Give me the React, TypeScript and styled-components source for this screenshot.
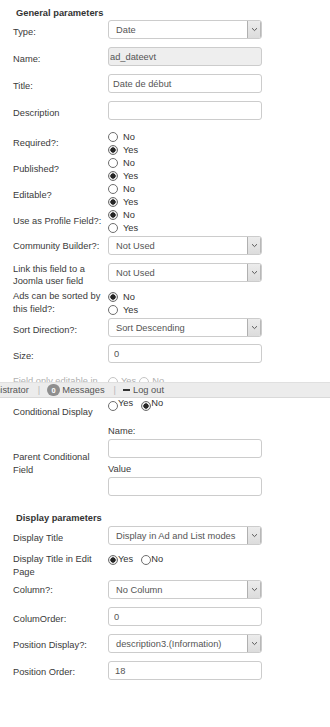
import React from "react";
import styled, { createGlobalStyle } from "styled-components";

const GlobalStyle = createGlobalStyle`
  html, body {
    margin: 0;
    padding: 0;
    background: #ffffff;
  }
  body {
    font-family: "Liberation Sans", Arial, sans-serif;
    font-size: 9.3px;
    color: #3a3a3a;
  }
  * { box-sizing: border-box; }
`;

const Page = styled.div`
  width: 330px;
  min-height: 727px;
  display: flex;
  flex-direction: column;
`;

const Section = styled.div`
  display: flex;
  flex-direction: column;
  padding-left: 13px;
`;

const SectionTitle = styled.div<{ $mt?: number }>`
  margin-top: ${(p) => p.$mt ?? 7}px;
  padding-left: 3px;
  line-height: 12px;
  font-weight: bold;
  color: #333;
`;

const Row = styled.div<{ $mt?: number }>`
  display: grid;
  grid-template-columns: 95px 154px;
  align-items: start;
  margin-top: ${(p) => p.$mt ?? 8}px;
`;

const Label = styled.div<{ $pt?: number; $lh?: number }>`
  padding: ${(p) => p.$pt ?? 6}px 4px 0 0;
  line-height: ${(p) => p.$lh ?? 12}px;
  color: #3a3a3a;
`;

const TextInput = styled.input<{ $pl?: number }>`
  display: block;
  width: 154px;
  height: 19px;
  margin: 0;
  border: 1px solid #cccccc;
  border-radius: 3px;
  background: #ffffff;
  padding: 0 0 0 ${(p) => p.$pl ?? 4}px;
  font: inherit;
  color: #555;
  outline: none;
  &:read-only { cursor: default; }
  &[data-disabled="true"] {
    background: #eeeeee;
  }
`;

const SelectBox = styled.div`
  display: flex;
  align-items: stretch;
  width: 154px;
  height: 19px;
  border: 1px solid #cccccc;
  border-radius: 3px;
  background: #ffffff;
  overflow: hidden;
`;

const SelectText = styled.span`
  flex: 1;
  display: flex;
  align-items: center;
  padding-left: 7px;
  color: #555;
  white-space: nowrap;
`;

const ArrowButton = styled.span`
  width: 14px;
  display: flex;
  align-items: center;
  justify-content: center;
  background: linear-gradient(#ececec, #dcdcdc);
  border-left: 1px solid #b0b0b0;
  border-right: 1px solid #b8b8b8;
`;

const RadioColumn = styled.div`
  display: flex;
  flex-direction: column;
`;

const RadioLine = styled.label`
  display: flex;
  align-items: center;
  height: 13px;
  gap: 5px;
  color: #333;
`;

const RadioInlineGroup = styled.div<{ $mt?: number }>`
  display: flex;
  align-items: flex-start;
  margin-top: ${(p) => p.$mt ?? 0}px;
`;

const RadioInline = styled.label<{ $raise?: boolean }>`
  display: flex;
  align-items: flex-start;
  margin-right: 8px;
  line-height: 10px;
  color: #333;
  & > span:first-child {
    margin-top: ${(p) => (p.$raise ? 3 : 1)}px;
  }
`;

const RadioCircle = styled.span<{ $checked?: boolean; $faded?: boolean }>`
  display: inline-block;
  flex: none;
  width: 10px;
  height: 10px;
  border-radius: 50%;
  border: 1px solid ${(p) => (p.$faded ? "#c4c4c4" : "#6e6e6e")};
  background: ${(p) =>
    p.$checked
      ? "radial-gradient(circle, #262626 0 2.4px, #e4e4e4 2.9px)"
      : "#ffffff"};
`;

const FadedRow = styled.div`
  display: grid;
  grid-template-columns: 95px 154px;
  margin-top: 12px;
  height: 7px;
  overflow: hidden;
  line-height: 13px;
  color: #b0b0b0;
`;

const FadedRadios = styled.div`
  display: flex;
  align-items: center;
  gap: 3px;
  height: 13px;
`;

const Bar = styled.div`
  display: flex;
  align-items: center;
  height: 16px;
  background: #ececec;
  border-top: 1px solid #e0e0e0;
  border-bottom: 1px solid #d9d9d9;
  color: #555;
  white-space: nowrap;
  overflow: hidden;
`;

const CutText = styled.span`
  margin-left: -26px;
`;

const Sep = styled.span`
  color: #b8b8b8;
  margin: 0 7px 0 9px;
`;

const Badge = styled.span`
  display: inline-flex;
  align-items: center;
  justify-content: center;
  min-width: 13px;
  height: 12px;
  padding: 0 3px;
  border-radius: 6px;
  background: #8e8e8e;
  color: #fff;
  font-size: 7.5px;
  font-weight: bold;
  margin-right: 2px;
`;

const DashIcon = styled.span`
  display: inline-block;
  width: 7px;
  height: 2px;
  background: #333;
  margin-right: 3px;
`;

const SubFields = styled.div`
  display: flex;
  flex-direction: column;
`;

const SubLabel = styled.div<{ $mt?: number }>`
  line-height: 13px;
  margin-top: ${(p) => p.$mt ?? 0}px;
  margin-bottom: 1px;
  color: #3a3a3a;
`;

const Chevron = () => (
  <svg width="7" height="5" viewBox="0 0 7 5">
    <path d="M1 1.2 L3.5 3.6 L6 1.2" fill="none" stroke="#5a5a5a" strokeWidth="1" />
  </svg>
);

const Select = ({ value }: { value: string }) => (
  <SelectBox>
    <SelectText>{value}</SelectText>
    <ArrowButton>
      <Chevron />
    </ArrowButton>
  </SelectBox>
);

const YesNoColumn = ({ yes }: { yes: boolean }) => (
  <RadioColumn>
    <RadioLine>
      <RadioCircle $checked={!yes} />
      <span>No</span>
    </RadioLine>
    <RadioLine>
      <RadioCircle $checked={yes} />
      <span>Yes</span>
    </RadioLine>
  </RadioColumn>
);

export default function App() {
  return (
    <Page>
      <GlobalStyle />
      <Section>
        <SectionTitle>General parameters</SectionTitle>
        <Row $mt={1}>
          <Label>Type:</Label>
          <Select value="Date" />
        </Row>
        <Row>
          <Label>Name:</Label>
          <TextInput readOnly value="ad_dateevt" data-disabled="true" $pl={1} />
        </Row>
        <Row>
          <Label>Title:</Label>
          <TextInput readOnly value="Date de début" $pl={4} />
        </Row>
        <Row>
          <Label>Description</Label>
          <TextInput readOnly value="" />
        </Row>
        <Row $mt={10}>
          <Label $pt={7}>Required?:</Label>
          <YesNoColumn yes />
        </Row>
        <Row $mt={0}>
          <Label $pt={7}>Published?</Label>
          <YesNoColumn yes />
        </Row>
        <Row $mt={0}>
          <Label $pt={7}>Editable?</Label>
          <YesNoColumn yes />
        </Row>
        <Row $mt={0}>
          <Label $pt={7}>Use as Profile Field?:</Label>
          <YesNoColumn yes={false} />
        </Row>
        <Row $mt={2}>
          <Label $pt={4}>Community Builder?:</Label>
          <Select value="Not Used" />
        </Row>
        <Row>
          <Label $pt={0}>Link this field to a Joomla user field</Label>
          <Select value="Not Used" />
        </Row>
        <Row $mt={3}>
          <Label $pt={0} $lh={13}>Ads can be sorted by this field?:</Label>
          <YesNoColumn yes={false} />
        </Row>
        <Row $mt={2}>
          <Label>Sort Direction?:</Label>
          <Select value="Sort Descending" />
        </Row>
        <Row $mt={7}>
          <Label>Size:</Label>
          <TextInput readOnly value="0" $pl={5} />
        </Row>
        <FadedRow>
          <span>Field only editable in</span>
          <FadedRadios>
            <RadioCircle $faded />
            <span>Yes</span>
            <RadioCircle $faded />
            <span>No</span>
          </FadedRadios>
        </FadedRow>
      </Section>

      <Bar>
        <CutText>Administrator</CutText>
        <Sep>|</Sep>
        <Badge>0</Badge>
        <span>Messages</span>
        <Sep>|</Sep>
        <DashIcon />
        <span>Log out</span>
      </Bar>

      <Section>
        <Row $mt={0}>
          <Label $pt={8}>Conditional Display</Label>
          <RadioInlineGroup>
            <RadioInline $raise>
              <RadioCircle />
              <span>Yes</span>
            </RadioInline>
            <RadioInline $raise>
              <RadioCircle $checked />
              <span>No</span>
            </RadioInline>
          </RadioInlineGroup>
        </Row>
        <Row $mt={7}>
          <Label $pt={26} $lh={13}>Parent Conditional Field</Label>
          <SubFields>
            <SubLabel>Name:</SubLabel>
            <TextInput readOnly value="" />
            <SubLabel $mt={5}>Value</SubLabel>
            <TextInput readOnly value="" />
          </SubFields>
        </Row>

        <SectionTitle $mt={16}>Display parameters</SectionTitle>
        <Row $mt={2}>
          <Label>Display Title</Label>
          <Select value="Display in Ad and List modes" />
        </Row>
        <Row $mt={8}>
          <Label $pt={0} $lh={13}>Display Title in Edit Page</Label>
          <RadioInlineGroup $mt={1}>
            <RadioInline>
              <RadioCircle $checked />
              <span>Yes</span>
            </RadioInline>
            <RadioInline>
              <RadioCircle />
              <span>No</span>
            </RadioInline>
          </RadioInlineGroup>
        </Row>
        <Row $mt={1}>
          <Label $pt={4}>Column?:</Label>
          <Select value="No Column" />
        </Row>
        <Row>
          <Label>ColumOrder:</Label>
          <TextInput readOnly value="0" $pl={5} />
        </Row>
        <Row>
          <Label $pt={5}>Position Display?:</Label>
          <Select value="description3.(Information)" />
        </Row>
        <Row>
          <Label $pt={5}>Position Order:</Label>
          <TextInput readOnly value="18" $pl={6} />
        </Row>
      </Section>
    </Page>
  );
}
